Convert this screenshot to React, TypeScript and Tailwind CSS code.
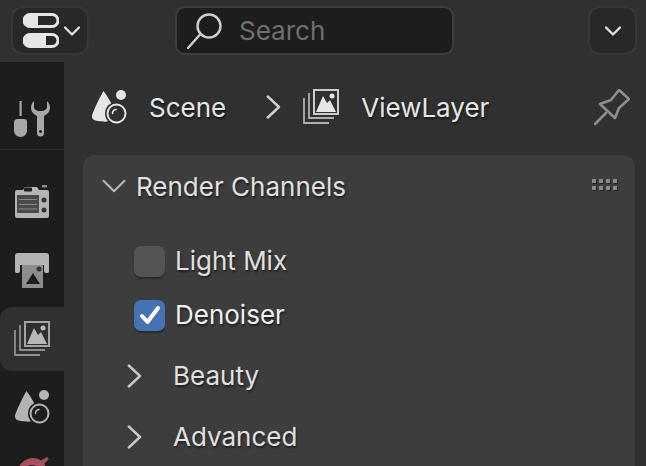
const shadow = "[text-shadow:1px_2px_2px_rgba(0,0,0,0.5)]";

function EditorIcon() {
  return (
    <svg width="36" height="35" viewBox="0 0 36 35">
      <path fillRule="evenodd" fill="#e6e6e6" d="M7 0h22a7.500 7.500 0 0 1 0 15H7A7.500 7.500 0 0 1 7 0zM15 3v9h14a4.500 4.500 0 0 0 0-9z" />
      <path fillRule="evenodd" fill="#e6e6e6" d="M7 20h22a7.500 7.500 0 0 1 0 15H7a7.500 7.500 0 0 1 0-15zM23 23v9h6a4.500 4.500 0 0 0 0-9z" />
    </svg>
  );
}

function Chevron({ dir = "down", size = 16, color = "#e0e0e0", w = 2.4 }: { dir?: string; size?: number; color?: string; w?: number }) {
  return (
    <svg width={size} height={size} viewBox="0 0 16 16" fill="none" stroke={color} strokeWidth={w} strokeLinecap="round" strokeLinejoin="round">
      <path d={dir === "down" ? "M1 4.500 8 11.500 15 4.500" : "M4.500 1 12 8 4.500 15"} />
    </svg>
  );
}

function SceneIcon({ color, bg }: { color: string; bg: string }) {
  return (
    <svg width="36" height="36" viewBox="0 0 36 36">
      <path fill={color} d="M13 1c3 3 10 14 11 20 .5 3-1 6-2 8-3 3-6 4-11 3-5-.5-10-1-10-5 0-3 8-19 12-26z" transform="translate(0 1) scale(.95 .98)" />
      <circle cx="30" cy="6" r="5" fill={color} />
      <circle cx="25.500" cy="24.500" r="11.500" fill={bg} />
      <circle cx="25.500" cy="24.500" r="9" fill="none" stroke={color} strokeWidth="2" />
      <path d="M21.500 24.500a4 4 0 0 1 3.500-4" fill="none" stroke={color} strokeWidth="1.600" strokeLinecap="round" />
    </svg>
  );
}

function ViewLayerIcon({ color }: { color: string }) {
  return (
    <svg width="36" height="36" viewBox="0 0 36 36">
      <path fill="none" stroke={color} strokeOpacity="0.7" strokeWidth="1.800" d="M1 9v25h25" />
      <path fill="none" stroke={color} strokeOpacity="0.7" strokeWidth="1.800" d="M6 4v25h25" />
      <rect x="11" y="1" width="24" height="24" fill="#303030" stroke={color} strokeOpacity="0.85" strokeWidth="2" />
      <path fill={color} d="M13 23 20 7 24 14 27 11 33 23z" />
      <circle cx="29" cy="7" r="2.500" fill={color} />
    </svg>
  );
}

function ToolIcon() {
  return (
    <svg width="36" height="36" viewBox="0 0 36 36" fill="#a8a8a8">
      <rect x="5.500" y="0" width="2.200" height="15" />
      <path d="M0 21c0-2 2-3 3-3h7c2 0 3 1 3 3v9a6.500 6 0 0 1-13 0z" />
      <path fillRule="evenodd" d="M20 0c-2 2-3 4-3 7 0 3 2 6 6 8v17a3.500 3.500 0 0 0 7 0V15c4-2 6-5 6-8 0-3-1-5-3-7v6c0 2-2 4-6.500 4S20 8 20 6zM26.500 29a1.500 1.500 0 1 0 .01 0z" />
    </svg>
  );
}

function RenderIcon() {
  return (
    <svg width="36" height="33" viewBox="0 0 36 33">
      <path fill="#b4b4b4" d="M3 5h6l2-3h12l2 3h8a2 2 0 0 1 2 2v24a2 2 0 0 1-2 2H3a2 2 0 0 1-2-2V7a2 2 0 0 1 2-2z" />
      <rect x="10" y="2.500" width="8" height="4" fill="#1d1d1d" rx="1" />
      <rect x="28" y="0" width="5" height="2.500" fill="#8a8a8a" />
      <rect x="3" y="10" width="22" height="18" fill="#4a4a4a" />
      <path d="M5 14.500h18M5 19.500h18M5 24h18" stroke="#8a8a8a" strokeWidth="1" />
      <circle cx="30" cy="15" r="2.500" fill="#333" />
      <circle cx="30" cy="25" r="2.500" fill="#333" />
    </svg>
  );
}

function OutputIcon() {
  return (
    <svg width="36" height="36" viewBox="0 0 36 36">
      <path fill="#b4b4b4" d="M4 1h28a3 3 0 0 1 3 3v15c0 2-1 2-2 2h-1a2 2 0 0 1-2-2v-6H6v6a2 2 0 0 1-2 2H3c-1 0-2 0-2-2V4a3 3 0 0 1 3-3z" />
      <rect x="8" y="13" width="21" height="23" fill="#8d8d8d" />
      <path fill="#1d1d1d" d="M12 32 19 21 26 32z" />
      <circle cx="25" cy="17" r="2.500" fill="#333" />
    </svg>
  );
}

function PinIcon() {
  return (
    <svg width="36" height="36" viewBox="0 0 36 36" fill="none" stroke="#8e8e8e" strokeWidth="2.600" strokeLinejoin="round" strokeLinecap="round">
      <path d="M1 35 12 24" />
      <path d="M6 15 17 11 25 1 35 10 25 19 21 29z" />
    </svg>
  );
}

function SearchIcon() {
  return (
    <svg width="36" height="36" viewBox="0 0 36 36" fill="none" stroke="#cfcfcf" strokeWidth="2.400" strokeLinecap="round">
      <circle cx="22" cy="13" r="11.500" />
      <path d="M1 35 13.500 21" />
    </svg>
  );
}

function WorldIcon() {
  return (
    <svg width="36" height="36" viewBox="0 0 36 36">
      <path fill="#a8505f" d="M3 14C6 5 13 1 19 1c3 0 6 1 8 2.500L33 0l2 2-5 5c2 2 3 5 3 7H3z" />
      <path fill="#1d1d1d" d="M11 11c3-3 7-4 11-2 2 1 3 3 3 5H11z" />
    </svg>
  );
}

function Tab({ children, active = false, h = "h-[64px]" }: { children: React.ReactNode; active?: boolean; h?: string }) {
  return (
    <div className={`flex items-center justify-center ${h} ${active ? "bg-[#303030] rounded-l-[12px]" : ""}`}>
      {children}
    </div>
  );
}

function SubRow({ label }: { label: string }) {
  return (
    <div className="flex items-center h-[61px] pl-[39px]">
      <Chevron dir="right" size={24} color="#c8c8c8" w={1.600} />
      <span className={`ml-[27px] text-[26px] text-[#e0e0e0] ${shadow}`}>{label}</span>
    </div>
  );
}

export default function App() {
  return (
    <div className="w-[646px] h-[466px] overflow-hidden bg-[#303030] font-['Inter','Liberation_Sans',sans-serif] flex flex-col">
      <header className="h-[62px] shrink-0 flex items-start pt-[6px] pl-[11px] pr-[9px]">
        <button className="w-[78px] h-[49px] rounded-[12px] bg-[#282828] border-2 border-[#383838] flex items-center pl-[10px] gap-[5px]">
          <EditorIcon />
          <Chevron size={16} />
        </button>
        <div className="ml-[86px] w-[279px] h-[49px] rounded-[10px] bg-[#1d1d1d] border-2 border-[#3d3d3d] flex items-center pl-[10px] gap-[16px]">
          <SearchIcon />
          <span className="text-[26px] text-[#6f6f6f]">Search</span>
        </div>
        <button className="ml-auto w-[49px] h-[49px] rounded-[12px] bg-[#282828] border-2 border-[#383838] flex items-center justify-center">
          <Chevron size={16} />
        </button>
      </header>

      <div className="flex flex-1 min-h-0">
        <aside className="w-[64px] shrink-0 bg-[#1d1d1d] flex flex-col">
          <div className="h-[88px] flex items-center justify-center border-b border-[#2a2a2a] shrink-0 pt-[26px]">
            <ToolIcon />
          </div>
          <div className="mt-[19px] flex flex-col shrink-0">
            <Tab h="h-[64px]"><RenderIcon /></Tab>
            <Tab h="h-[74px]"><OutputIcon /></Tab>
            <Tab active h="h-[64px]"><ViewLayerIcon color="#b8b8b8" /></Tab>
            <Tab h="h-[72px]"><SceneIcon color="#b4b4b4" bg="#1d1d1d" /></Tab>
            <Tab h="h-[64px]"><WorldIcon /></Tab>
          </div>
        </aside>

        <main className="flex-1 min-w-0 flex flex-col pl-[19px] pr-[11px]">
          <div className="h-[90px] mb-[3px] shrink-0 flex items-center pl-[8px]">
            <SceneIcon color="#e6e6e6" bg="#303030" />
            <span className={`ml-[22px] text-[26px] text-[#e6e6e6] ${shadow}`}>Scene</span>
            <div className="ml-[35px]"><Chevron dir="right" size={24} color="#d0d0d0" w={1.600} /></div>
            <div className="ml-[18px]"><ViewLayerIcon color="#e6e6e6" /></div>
            <span className={`ml-[22px] text-[26px] text-[#e6e6e6] ${shadow}`}>ViewLayer</span>
            <div className="ml-auto mr-[5px]"><PinIcon /></div>
          </div>

          <section className="flex-1 bg-[#3d3d3d] rounded-t-[12px]">
            <div className="h-[62px] flex items-center pl-[19px] pr-[18px]">
              <Chevron size={24} color="#b8b8b8" w={1.400} />
              <span className={`ml-[10px] text-[26px] text-[#e0e0e0] ${shadow}`}>Render Channels</span>
              <div className="ml-auto grid grid-cols-4 gap-x-[3px] gap-y-[3px] -mt-[3px]">
                {Array.from({ length: 8 }).map((_, i) => (
                  <div key={i} className="w-[4px] h-[4px] bg-[#8a8a8a] shadow-[1px_1px_0_#222]" />
                ))}
              </div>
            </div>

            <div className="mt-[17px] pl-[51px] flex items-center h-[54px]">
              <div className="w-[31px] h-[31px] rounded-[7px] bg-[#545454] shadow-[0_2px_1px_rgba(0,0,0,0.3)]" />
              <span className={`ml-[10px] -mt-[2px] text-[26px] text-[#e0e0e0] ${shadow}`}>Light Mix</span>
            </div>
            <div className="pl-[51px] flex items-center h-[54px]">
              <div className="w-[31px] h-[31px] rounded-[7px] bg-[#4772b3] shadow-[0_2px_1px_rgba(0,0,0,0.3)] flex items-center justify-center">
                <svg width="24" height="24" viewBox="0 0 24 24" fill="none" stroke="#ffffff" strokeWidth="4" strokeLinecap="round" strokeLinejoin="round">
                  <path d="M4 13 9.500 19 20 5" />
                </svg>
              </div>
              <span className={`ml-[10px] -mt-[2px] text-[26px] text-[#f0f0f0] ${shadow}`}>Denoiser</span>
            </div>
            <div className="mt-[3px]">
              <SubRow label="Beauty" />
              <SubRow label="Advanced" />
            </div>
          </section>
        </main>
      </div>
    </div>
  );
}
